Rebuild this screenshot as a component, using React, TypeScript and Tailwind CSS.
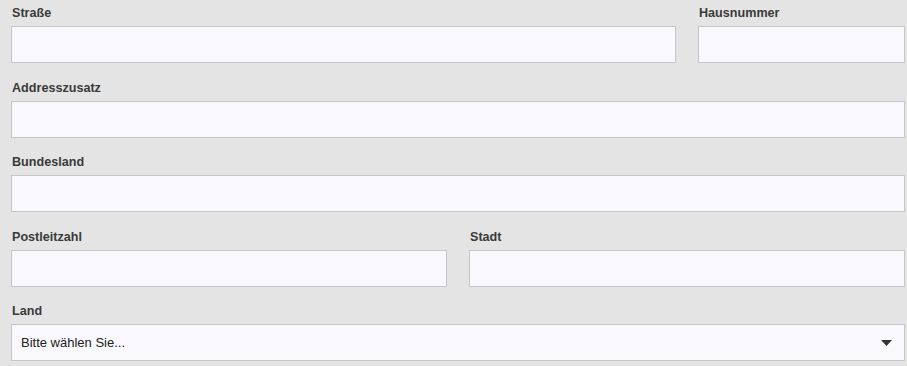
const font = { fontFamily: '"Liberation Sans", Arial, sans-serif' };

function Field({ label, span, children }: { label: string; span: string; children?: React.ReactNode }) {
  return (
    <div className={span}>
      <label className="block h-4 text-[12.6px] leading-4 font-bold text-[#3a3a3a] pl-px mb-[5px]">{label}</label>
      {children ?? <input type="text" className="block w-full h-[37px] bg-[#f8f8fd] border border-[#c6c6c6] outline-none" />}
    </div>
  );
}

export default function App() {
  return (
    <div className="w-[907px] h-[366px] bg-[#e4e4e4] pl-[11px] pr-[2px] pt-[5px] overflow-hidden" style={font}>
      <div className="grid grid-cols-12 gap-x-[22px] gap-y-[16.5px]">
        <Field label="Straße" span="col-span-9" />
        <Field label="Hausnummer" span="col-span-3" />
        <Field label="Addresszusatz" span="col-span-12" />
        <Field label="Bundesland" span="col-span-12" />
        <Field label="Postleitzahl" span="col-span-6" />
        <Field label="Stadt" span="col-span-6" />
        <Field label="Land" span="col-span-12">
          <div className="relative h-[37px] bg-[#f8f8fd] border border-[#c6c6c6] flex items-center pl-[9px]">
            <span className="text-[13px] text-[#222]">Bitte wählen Sie...</span>
            <svg className="absolute right-[12px] top-[15px]" width="11" height="6" viewBox="0 0 11 6">
              <path d="M0 0h11L5.5 6z" fill="#333" />
            </svg>
          </div>
        </Field>
      </div>
    </div>
  );
}
